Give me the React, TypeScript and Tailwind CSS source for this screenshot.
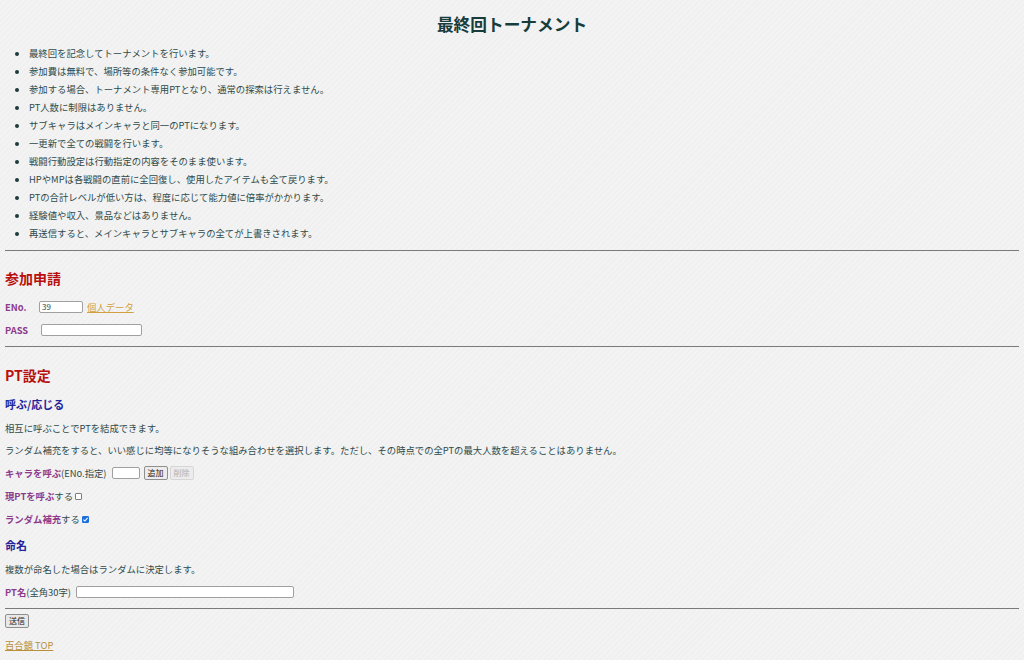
import { useState } from "react";

const rules = [
  "最終回を記念してトーナメントを行います。",
  "参加費は無料で、場所等の条件なく参加可能です。",
  "参加する場合、トーナメント専用PTとなり、通常の探索は行えません。",
  "PT人数に制限はありません。",
  "サブキャラはメインキャラと同一のPTになります。",
  "一更新で全ての戦闘を行います。",
  "戦闘行動設定は行動指定の内容をそのまま使います。",
  "HPやMPは各戦闘の直前に全回復し、使用したアイテムも全て戻ります。",
  "PTの合計レベルが低い方は、程度に応じて能力値に倍率がかかります。",
  "経験値や収入、景品などはありません。",
  "再送信すると、メインキャラとサブキャラの全てが上書きされます。",
];

function Label({ children }: { children: React.ReactNode }) {
  return <span className="font-bold text-[#8c3b8c]">{children}</span>;
}

function Hr({ mt }: { mt: string }) {
  return <div className={`${mt} border-t border-[#7a7a7a]`} />;
}

// small square checkbox, drawn so it stays square at 7px
function Check({ checked, onChange }: { checked: boolean; onChange: (v: boolean) => void }) {
  return (
    <span className="relative ml-[2px] inline-flex w-[7px] h-[7px]">
      <input
        type="checkbox"
        checked={checked}
        onChange={(e) => onChange(e.target.checked)}
        className="appearance-none m-0 w-[7px] h-[7px] bg-white border border-[#7d7d7d] rounded-[1px] checked:bg-[#1b6fdc] checked:border-[#1b6fdc]"
      />
      {checked && (
        <svg viewBox="0 0 8 8" className="pointer-events-none absolute inset-0 w-[7px] h-[7px]">
          <path d="M1.6 4.2 L3.3 5.8 L6.4 2.2" fill="none" stroke="#fff" strokeWidth="1.2" />
        </svg>
      )}
    </span>
  );
}

export default function App() {
  const [eno, setEno] = useState("39");
  const [callPt, setCallPt] = useState(false);
  const [random, setRandom] = useState(true);

  return (
    <div
      className="min-h-[660px] px-[5px] pb-[6px] text-[9.35px] text-[#2f4a4a] bg-[#f2f2f2] bg-[repeating-linear-gradient(135deg,#f3f3f3_0px,#f3f3f3_2px,#f0f0f0_2px,#f0f0f0_4px)]"
      style={{ fontFamily: '"Noto Sans CJK JP", "Noto Sans", sans-serif' }}
    >
      <h1 className="pt-[12px] h-[36px] leading-[24px] text-center text-[16.7px] font-bold text-[#173c3c]">
        最終回トーナメント
      </h1>

      {/* rules */}
      <ul className="mt-[8px] pl-[24px] list-disc marker:text-[#1f3a3a]">
        {rules.map((r) => (
          <li key={r} className="h-[18px] leading-[18px]">
            {r}
          </li>
        ))}
      </ul>

      <Hr mt="mt-[8px]" />

      {/* entry */}
      <h2 className="mt-[17px] h-[20px] leading-[20px] text-[14px] font-bold text-[#b80f0f]">参加申請</h2>
      <div className="mt-[9px] h-[20px] flex items-center">
        <span className="w-[34px]">
          <Label>ENo.</Label>
        </span>
        <input
          value={eno}
          onChange={(e) => setEno(e.target.value)}
          className="w-[44px] h-[12px] px-[2px] text-[8px] bg-white border border-[#a0a0a0] rounded-[2px] outline-none"
        />
        <a href="#" className="ml-[4px] text-[#d2a040] underline">
          個人データ
        </a>
      </div>
      <div className="mt-[3px] h-[20px] flex items-center">
        <span className="w-[36px]">
          <Label>PASS</Label>
        </span>
        <input
          type="password"
          className="w-[101px] h-[12px] px-[2px] text-[8px] bg-white border border-[#a0a0a0] rounded-[2px] outline-none"
        />
      </div>

      <Hr mt="mt-[6px]" />

      {/* party */}
      <h2 className="mt-[18px] h-[20px] leading-[20px] text-[14px] font-bold text-[#b80f0f]">PT設定</h2>
      <h3 className="mt-[10px] h-[18px] leading-[18px] text-[11px] font-bold text-[#23239c]">呼ぶ/応じる</h3>
      <p className="mt-[6px] h-[18px] leading-[18px]">相互に呼ぶことでPTを結成できます。</p>
      <p className="mt-[4px] h-[18px] leading-[18px]">
        ランダム補充をすると、いい感じに均等になりそうな組み合わせを選択します。ただし、その時点での全PTの最大人数を超えることはありません。
      </p>
      <div className="mt-[5px] h-[18px] flex items-center">
        <Label>キャラを呼ぶ</Label>
        <span>(ENo.指定)</span>
        <input className="ml-[5px] w-[28px] h-[12px] bg-white border border-[#a0a0a0] rounded-[2px] outline-none" />
        <button className="ml-[4px] h-[14px] px-[3px] text-[8px] leading-none text-[#222] bg-[#ececec] border border-[#8f8f8f] rounded-[2px]">
          追加
        </button>
        <button
          disabled
          className="ml-[2px] h-[14px] px-[3px] text-[8px] leading-none text-[#b0b0b0] bg-[#ececec] border border-[#d6d6d6] rounded-[2px]"
        >
          削除
        </button>
      </div>
      <div className="mt-[5px] h-[18px] flex items-center">
        <Label>現PTを呼ぶ</Label>
        <span>する</span>
        <Check checked={callPt} onChange={setCallPt} />
      </div>
      <div className="mt-[5px] h-[18px] flex items-center">
        <Label>ランダム補充</Label>
        <span>する</span>
        <Check checked={random} onChange={setRandom} />
      </div>

      <h3 className="mt-[8px] h-[18px] leading-[18px] text-[11px] font-bold text-[#23239c]">命名</h3>
      <p className="mt-[6px] h-[18px] leading-[18px]">複数が命名した場合はランダムに決定します。</p>
      <div className="mt-[5px] h-[18px] flex items-center">
        <Label>PT名</Label>
        <span>(全角30字)</span>
        <input className="ml-[5px] w-[218px] h-[12px] bg-white border border-[#a0a0a0] rounded-[2px] outline-none" />
      </div>

      <Hr mt="mt-[7px]" />

      <button className="mt-[5px] h-[14px] px-[3px] text-[8px] leading-none text-[#222] bg-[#e8e8e8] border border-[#8f8f8f] rounded-[2px]">
        送信
      </button>
      <div className="mt-[8px] h-[18px] leading-[18px]">
        <a href="#" className="text-[#b8903e] underline">
          百合鏡 TOP
        </a>
      </div>
    </div>
  );
}
